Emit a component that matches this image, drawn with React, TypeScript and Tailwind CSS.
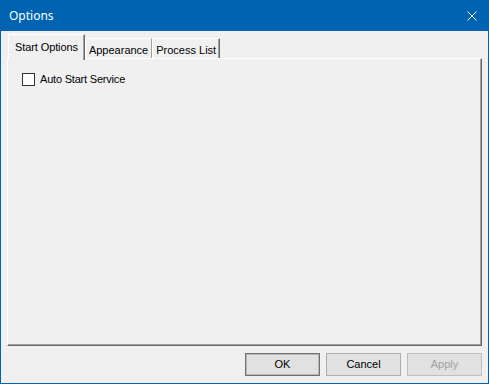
const ui = { fontFamily: '"Liberation Sans", Arial, sans-serif' }

type TabProps = {
  label: string
  selected?: boolean
  last?: boolean
}

function Tab({ label, selected, last }: TabProps) {
  if (selected) {
    return (
      <div className="relative z-10 mb-[-2px] flex h-[26px] items-start border-l border-t border-white bg-[#f0f0f0] px-[6px] pt-[4px] text-[11px] tracking-[-0.1px] text-black shadow-[inset_-1px_0_#a0a0a0] border-r border-r-[#696969]">
        {label}
      </div>
    )
  }
  return (
    <div
      className={
        'flex h-[20px] items-start border-l border-t border-white bg-[#f0f0f0] px-[3px] pt-[3px] text-[11px] text-black ' +
        (last ? 'border-r border-r-[#696969] shadow-[inset_-1px_0_#a0a0a0]' : 'border-r border-r-[#a0a0a0]')
      }
    >
      {label}
    </div>
  )
}

function DialogButton({ label, kind }: { label: string; kind?: 'default' | 'disabled' }) {
  const tone =
    kind === 'default'
      ? 'border-[#707070] shadow-[inset_0_0_0_1px_#b8b8b8] text-black'
      : kind === 'disabled'
        ? 'border-[#bfbfbf] text-[#a0a0a0]'
        : 'border-[#adadad] text-black'
  return (
    <button
      className={'flex h-[23px] w-[75px] items-center justify-center border bg-[#e1e1e1] text-[11px] ' + tone}
      style={ui}
    >
      {label}
    </button>
  )
}

export default function App() {
  return (
    <div className="flex h-[384px] w-[489px] flex-col bg-[#0063b1]" style={ui}>
      <div className="flex h-[31px] shrink-0 items-center justify-between pl-[9px] pr-[11px] text-white">
        <span className="text-[12px]" style={{ fontFamily: '"Noto Sans", "Open Sans", sans-serif' }}>
          Options
        </span>
        <svg width="10" height="10" viewBox="0 0 10 10" className="mr-[1px]">
          <path d="M0.5 0.5 L9.5 9.5 M9.5 0.5 L0.5 9.5" stroke="white" strokeWidth="1" />
        </svg>
      </div>
      <div className="mx-[1px] mb-[1px] flex flex-1 flex-col bg-[#f0f0f0] px-[6px] pt-[2px]">
        <div className="flex h-[25px] items-end pl-[1px]">
          <Tab label="Start Options" selected />
          <Tab label="Appearance" />
          <Tab label="Process List" last />
        </div>
        <div className="h-[288px] border-l border-t border-white border-r border-b border-r-[#696969] border-b-[#696969] shadow-[inset_-1px_-1px_#a0a0a0]">
          <label className="ml-[14px] mt-[12px] flex items-center gap-[5px] text-[11px] tracking-[-0.2px] text-black">
            <span className="h-[13px] w-[13px] border border-[#333333] bg-white" />
            <span>Auto Start Service</span>
          </label>
        </div>
        <div className="mt-[7px] flex justify-end gap-[6px]">
          <DialogButton label="OK" kind="default" />
          <DialogButton label="Cancel" />
          <DialogButton label="Apply" kind="disabled" />
        </div>
      </div>
    </div>
  )
}
